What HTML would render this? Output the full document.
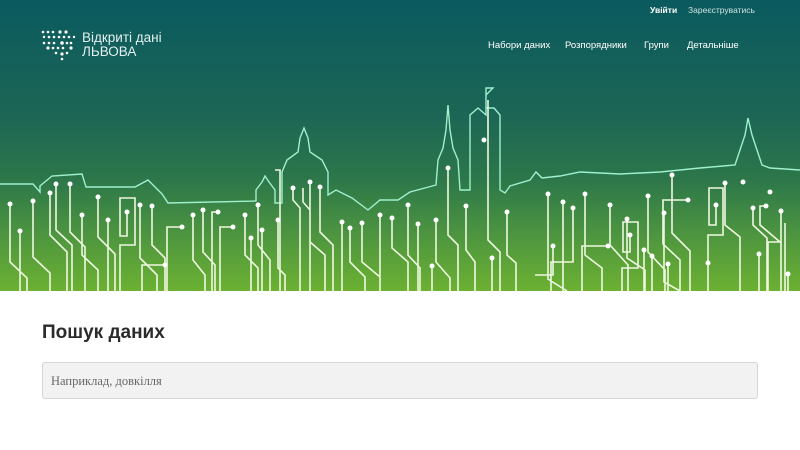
<!DOCTYPE html>
<html><head><meta charset="utf-8"><style>
*{margin:0;padding:0;box-sizing:border-box}
body{width:800px;height:450px;background:#fff;font-family:"Liberation Sans",sans-serif;overflow:hidden;position:relative}
.hero{position:absolute;left:0;top:0;width:800px;height:291px;background:linear-gradient(#0a5a5f 0%,#1d6655 40%,#2d774a 62%,#4c9440 80%,#6cb132 100%)}
.t{position:absolute;white-space:nowrap}
.top{top:5px;font-size:8.5px;color:#cfe2df}
.nav{top:40px;font-size:9.5px;color:#fff}
.logo{position:absolute;left:82px;top:31px;color:#e3efef;font-size:13.5px;line-height:14px;font-weight:300}
h1{position:absolute;left:42px;top:322px;font-size:19px;font-weight:bold;color:#2b2b2b}
.search{position:absolute;left:42px;top:362px;width:716px;height:37px;background:#f2f2f2;border:1px solid #d6d6d6;border-radius:3px;font-family:"Liberation Serif",serif;font-size:12.5px;color:#666;padding:11px 8px}
</style></head><body>
<div class="hero">
<svg width="800" height="291" style="position:absolute;left:0;top:0">
<g fill="#fff">
<circle cx="43" cy="32" r="1.3"/><circle cx="48" cy="32" r="1.3"/><circle cx="53" cy="32" r="1.3"/><circle cx="60" cy="32" r="1.6"/><circle cx="66" cy="32" r="1.6"/>
<circle cx="44" cy="37" r="1.2"/><circle cx="49" cy="37" r="1.3"/><circle cx="54" cy="37" r="1.3"/><circle cx="59" cy="37" r="1.3"/><circle cx="64" cy="37" r="1.3"/><circle cx="69" cy="37" r="1.3"/><circle cx="74" cy="37" r="1.2"/>
<circle cx="44" cy="43" r="1.3"/><circle cx="49" cy="43" r="1.3"/><circle cx="54" cy="43" r="1.3"/><circle cx="62" cy="43" r="1.8"/><circle cx="67" cy="43" r="1.3"/><circle cx="71" cy="43" r="1.3"/>
<circle cx="48" cy="48" r="1.6"/><circle cx="53" cy="48" r="1.3"/><circle cx="58" cy="48" r="1.3"/><circle cx="63" cy="48" r="1.3"/><circle cx="71" cy="48" r="1.6"/>
<circle cx="56" cy="53" r="1.3"/><circle cx="62" cy="54" r="1.6"/><circle cx="67" cy="53" r="1.3"/><circle cx="62" cy="59" r="1.3"/>
</g>
<path fill="none" stroke="#9ef0cf" stroke-width="1.4" d="M0 184 L33 184 L40 192 L40 186 L52 176 L82 174 L86 187 L135 187 L148 180 L162 194 L168 203 L256 201 L256 190 L262 182 L265 176 L269 182 L275 190 L275 203 L282 203 L282 172 L287 160 L298 152 L300 138 L304 128 L308 138 L310 152 L322 160 L328 172 L328 195 L336 190 L352 198 L368 210 L380 200 L398 200 L410 192 L436 185 L438 160 L443 148 L446 130 L448 105 L450 130 L453 148 L458 160 L460 190 L470 190 L470 115 L478 108 L486 115 L486 88 L493 88 L486 95 L486 108 L494 108 L500 115 L500 190 L505 193 L510 186 L530 180 L536 172 L542 178 L560 176 L580 172 L620 174 L660 172 L700 168 L735 165 L740 150 L745 135 L748 118 L752 135 L757 150 L762 165 L770 168 L800 170"/>
<g fill="none" stroke="#eef8e0" stroke-width="1.6">
<path d="M10 204V262L27 278V291M20 231V291M33 201V257L50 273V291M50 193V235L67 252V291M56 184V230L72 245V291M70 184V232L85 247V291M82 215V255L98 270V291M98 197V237L115 254V291M108 220V291M127 212V236H120V198H135V245H120V291M140 205V258L157 275V291M152 206V245L165 258V291M165 265H142V291M182 227H167V291M193 215V260L205 275V291M203 210V252L215 265V291M218 212H212V291M233 227H220V291M245 215V255L258 268V291M251 238V291M258 205V245L270 260V291M262 230V291M278 220V268L285 275V291M275 170H280V291M293 188V200L300 208V291M303 188V202L310 210V291M310 182V242L325 255V291M320 187V232L333 245V291M342 222V291M350 228V262L365 277V291M362 223V262L380 277V291M380 215V291M392 218V248L408 262V291M408 205V255L420 268V291M418 224V291M432 266V291M436 220V262L450 278V291M448 168V235L458 245V291M466 206V250L475 262V291M488 100V240L500 252V291M492 258V291M507 212V255L516 263V291"/>
<path d="M548 194V279L567 291M553 246V275H535M563 202V291M573 208V262H551V291M585 194V255L602 268V291M608 246H582V291M610 205V245L628 265V291M627 219V258L645 270V291M630 235V252H623V222H638V268H622V291M644 250V291M648 196V252L665 270V291M652 256V291M664 213V282L680 291M668 264V291M672 175V233L690 251V291M688 200H663V244L680 260V291M708 263V291M716 205V225H709V188H723V235H708V291M725 183V225L740 237V291M753 208V225L767 238V291M759 254V291M766 206H760V225L780 242H768V291M781 211V291M785 223V291M788 274V291"/>
</g>
<g fill="#fff">
<circle cx="10" cy="204" r="2.5"/><circle cx="20" cy="231" r="2.5"/><circle cx="33" cy="201" r="2.5"/><circle cx="50" cy="193" r="2.5"/><circle cx="56" cy="184" r="2.5"/><circle cx="70" cy="184" r="2.5"/><circle cx="82" cy="215" r="2.5"/><circle cx="98" cy="197" r="2.5"/><circle cx="108" cy="220" r="2.5"/><circle cx="127" cy="212" r="2.5"/><circle cx="140" cy="205" r="2.5"/><circle cx="152" cy="206" r="2.5"/><circle cx="165" cy="265" r="2.5"/><circle cx="182" cy="227" r="2.5"/><circle cx="193" cy="215" r="2.5"/><circle cx="203" cy="210" r="2.5"/><circle cx="218" cy="212" r="2.5"/><circle cx="233" cy="227" r="2.5"/><circle cx="245" cy="215" r="2.5"/><circle cx="251" cy="238" r="2.5"/><circle cx="258" cy="205" r="2.5"/><circle cx="262" cy="230" r="2.5"/><circle cx="278" cy="220" r="2.5"/><circle cx="293" cy="188" r="2.5"/><circle cx="310" cy="182" r="2.5"/><circle cx="320" cy="187" r="2.5"/><circle cx="342" cy="222" r="2.5"/><circle cx="350" cy="228" r="2.5"/><circle cx="362" cy="223" r="2.5"/><circle cx="380" cy="215" r="2.5"/><circle cx="392" cy="218" r="2.5"/><circle cx="408" cy="205" r="2.5"/><circle cx="418" cy="224" r="2.5"/><circle cx="432" cy="266" r="2.5"/><circle cx="436" cy="220" r="2.5"/><circle cx="448" cy="168" r="2.5"/><circle cx="466" cy="206" r="2.5"/><circle cx="484" cy="140" r="2.5"/><circle cx="492" cy="258" r="2.5"/><circle cx="507" cy="212" r="2.5"/>
<circle cx="548" cy="194" r="2.5"/><circle cx="553" cy="246" r="2.5"/><circle cx="563" cy="202" r="2.5"/><circle cx="573" cy="208" r="2.5"/><circle cx="585" cy="194" r="2.5"/><circle cx="608" cy="246" r="2.5"/><circle cx="610" cy="205" r="2.5"/><circle cx="627" cy="219" r="2.5"/><circle cx="630" cy="235" r="2.5"/><circle cx="644" cy="250" r="2.5"/><circle cx="648" cy="196" r="2.5"/><circle cx="652" cy="256" r="2.5"/><circle cx="664" cy="213" r="2.5"/><circle cx="668" cy="264" r="2.5"/><circle cx="672" cy="175" r="2.5"/><circle cx="688" cy="200" r="2.5"/><circle cx="708" cy="263" r="2.5"/><circle cx="716" cy="205" r="2.5"/><circle cx="725" cy="183" r="2.5"/><circle cx="753" cy="208" r="2.5"/><circle cx="759" cy="254" r="2.5"/><circle cx="766" cy="206" r="2.5"/><circle cx="781" cy="211" r="2.5"/><circle cx="788" cy="274" r="2.5"/><circle cx="743" cy="182" r="2.5"/><circle cx="770" cy="192" r="2.5"/>
</g>
</svg>
<div class="logo">Відкриті дані<br>ЛЬВОВА</div>
<div class="t top" style="left:650px;font-weight:bold;color:#fff">Увійти</div>
<div class="t top" style="left:688px">Зареєструватись</div>
<div class="t nav" style="left:488px">Набори даних</div>
<div class="t nav" style="left:565px">Розпорядники</div>
<div class="t nav" style="left:644px">Групи</div>
<div class="t nav" style="left:687px">Детальніше</div>
</div>
<h1>Пошук даних</h1>
<div class="search">Наприклад, довкілля</div>
</body></html>
